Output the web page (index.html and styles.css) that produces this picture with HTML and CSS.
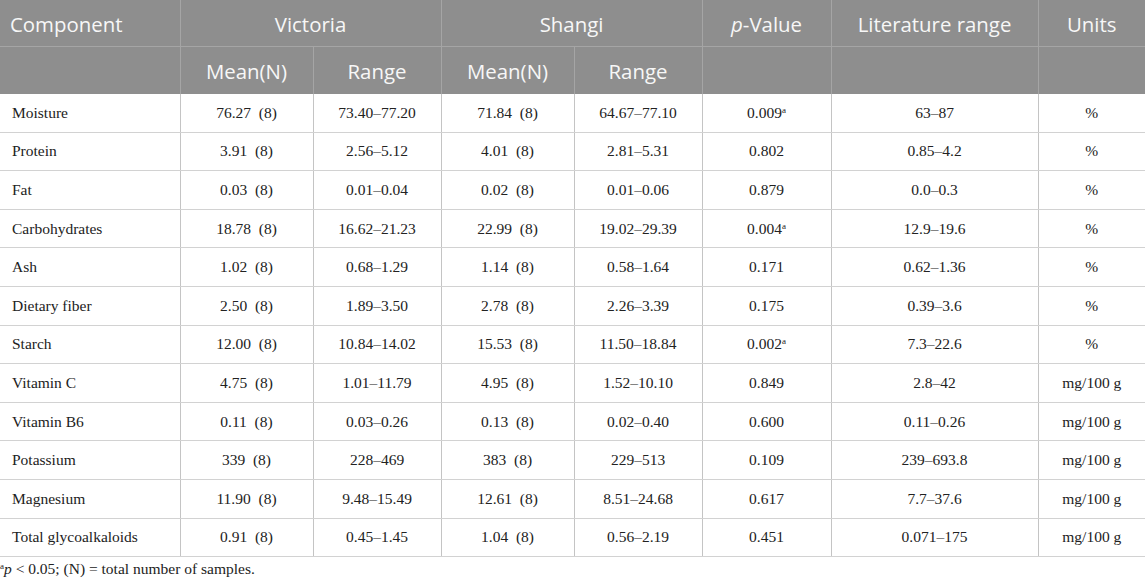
FILE: index.html
```html
<!DOCTYPE html>
<html>
<head>
<meta charset="utf-8">
<link rel="stylesheet" href="styles.css">
</head>
<body>
<table class="data">
  <colgroup>
    <col class="c-comp"><col class="c-mean"><col class="c-range"><col class="c-mean"><col class="c-range"><col class="c-p"><col class="c-lit"><col class="c-units">
  </colgroup>
  <thead>
    <tr class="h1">
      <th class="left">Component</th>
      <th colspan="2">Victoria</th>
      <th colspan="2">Shangi</th>
      <th><i>p</i>-Value</th>
      <th>Literature range</th>
      <th>Units</th>
    </tr>
    <tr class="h2">
      <th></th>
      <th>Mean(N)</th>
      <th>Range</th>
      <th>Mean(N)</th>
      <th>Range</th>
      <th></th>
      <th></th>
      <th></th>
    </tr>
  </thead>
  <tbody>
    <tr><td class="left">Moisture</td><td>76.27&ensp;(8)</td><td>73.40–77.20</td><td>71.84&ensp;(8)</td><td>64.67–77.10</td><td>0.009<sup>a</sup></td><td>63–87</td><td>%</td></tr>
    <tr><td class="left">Protein</td><td>3.91&ensp;(8)</td><td>2.56–5.12</td><td>4.01&ensp;(8)</td><td>2.81–5.31</td><td>0.802</td><td>0.85–4.2</td><td>%</td></tr>
    <tr><td class="left">Fat</td><td>0.03&ensp;(8)</td><td>0.01–0.04</td><td>0.02&ensp;(8)</td><td>0.01–0.06</td><td>0.879</td><td>0.0–0.3</td><td>%</td></tr>
    <tr><td class="left">Carbohydrates</td><td>18.78&ensp;(8)</td><td>16.62–21.23</td><td>22.99&ensp;(8)</td><td>19.02–29.39</td><td>0.004<sup>a</sup></td><td>12.9–19.6</td><td>%</td></tr>
    <tr><td class="left">Ash</td><td>1.02&ensp;(8)</td><td>0.68–1.29</td><td>1.14&ensp;(8)</td><td>0.58–1.64</td><td>0.171</td><td>0.62–1.36</td><td>%</td></tr>
    <tr><td class="left">Dietary fiber</td><td>2.50&ensp;(8)</td><td>1.89–3.50</td><td>2.78&ensp;(8)</td><td>2.26–3.39</td><td>0.175</td><td>0.39–3.6</td><td>%</td></tr>
    <tr><td class="left">Starch</td><td>12.00&ensp;(8)</td><td>10.84–14.02</td><td>15.53&ensp;(8)</td><td>11.50–18.84</td><td>0.002<sup>a</sup></td><td>7.3–22.6</td><td>%</td></tr>
    <tr><td class="left">Vitamin C</td><td>4.75&ensp;(8)</td><td>1.01–11.79</td><td>4.95&ensp;(8)</td><td>1.52–10.10</td><td>0.849</td><td>2.8–42</td><td>mg/100 g</td></tr>
    <tr><td class="left">Vitamin B6</td><td>0.11&ensp;(8)</td><td>0.03–0.26</td><td>0.13&ensp;(8)</td><td>0.02–0.40</td><td>0.600</td><td>0.11–0.26</td><td>mg/100 g</td></tr>
    <tr><td class="left">Potassium</td><td>339&ensp;(8)</td><td>228–469</td><td>383&ensp;(8)</td><td>229–513</td><td>0.109</td><td>239–693.8</td><td>mg/100 g</td></tr>
    <tr><td class="left">Magnesium</td><td>11.90&ensp;(8)</td><td>9.48–15.49</td><td>12.61&ensp;(8)</td><td>8.51–24.68</td><td>0.617</td><td>7.7–37.6</td><td>mg/100 g</td></tr>
    <tr><td class="left">Total glycoalkaloids</td><td>0.91&ensp;(8)</td><td>0.45–1.45</td><td>1.04&ensp;(8)</td><td>0.56–2.19</td><td>0.451</td><td>0.071–175</td><td>mg/100 g</td></tr>
  </tbody>
</table>
<p class="note"><sup>a</sup><i>p</i> &lt; 0.05; (N) = total number of samples.</p>
</body>
</html>
```

FILE: styles.css
```css
html, body {
  margin: 0;
  padding: 0;
  background: #ffffff;
}

.data {
  width: 1145px;
  border-collapse: collapse;
  table-layout: fixed;
}

.c-comp { width: 180px; }
.c-mean { width: 133px; }
.c-range { width: 128px; }
.c-p { width: 129px; }
.c-lit { width: 207px; }
.c-units { width: 107px; }

.data th {
  background: #8e8e8e;
  color: #f7f7f7;
  font-family: "Open Sans", sans-serif;
  font-weight: 400;
  font-size: 20.4px;
  text-align: center;
  padding: 1px 10px 0 10px;
  border: 1px solid #a5a5a5;
  border-top: none;
}

.data .h1 th { height: 45px; }
.data .h2 th { height: 46px; border-bottom: none; }

.data th.left { text-align: left; }

.data th:first-child { border-left: none; }
.data th:last-child { border-right: none; }

.data td {
  font-family: "Liberation Serif", "Times New Roman", serif;
  font-size: 15.5px;
  color: #222222;
  text-align: center;
  padding: 0 8px;
  height: 37.6px;
  border-bottom: 1px solid #d2d2d2;
  border-left: 1px solid #c4c4c4;
  border-right: 1px solid #c4c4c4;
}

.data td:first-child { border-left: none; }
.data td:last-child { border-right: none; }

.data td.left {
  text-align: left;
  padding-left: 12px;
}

.data sup {
  font-size: 9px;
  vertical-align: 5px;
  line-height: 0;
}

.note {
  margin: 3px 0 0 0;
  font-family: "Liberation Serif", "Times New Roman", serif;
  font-size: 15.5px;
  color: #222222;
  line-height: 18px;
}

.note sup {
  font-size: 9px;
  vertical-align: 5px;
  line-height: 0;
}
```
